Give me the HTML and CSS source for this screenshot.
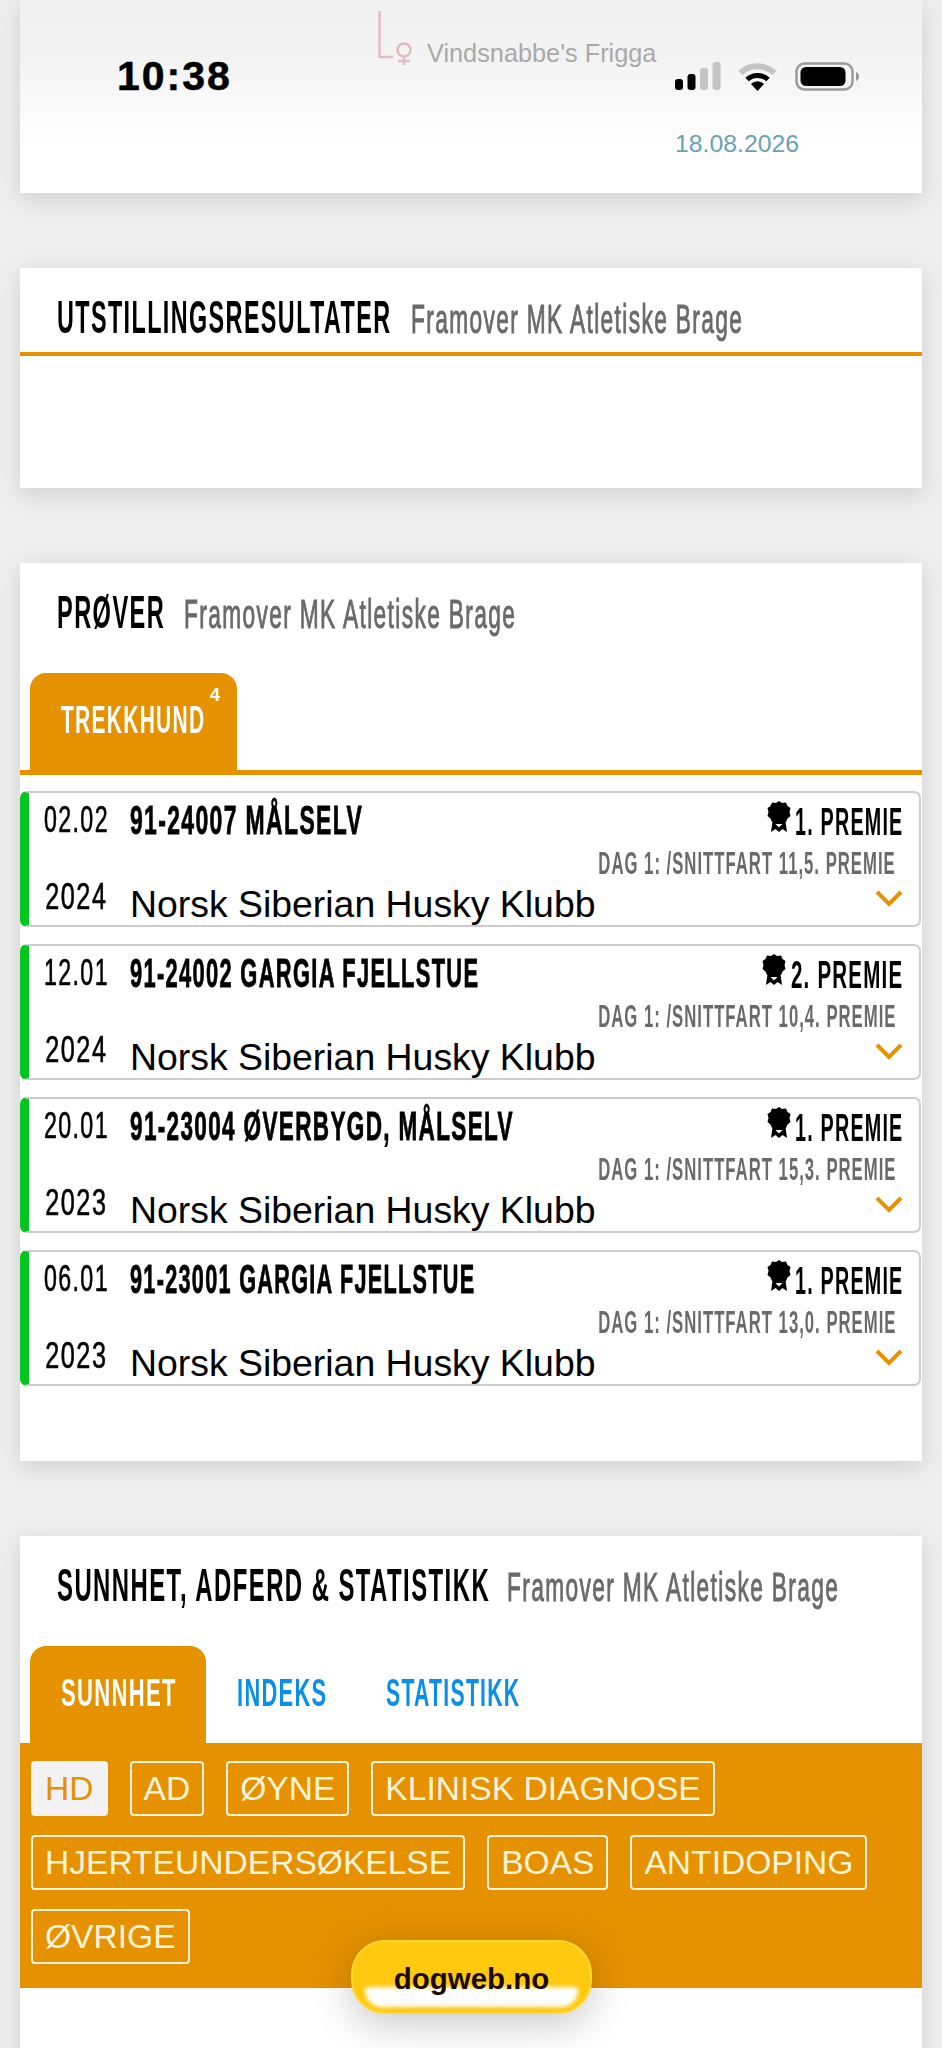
FILE: index.html
```html
<!DOCTYPE html>
<html lang="no">
<head>
    <meta charset="UTF-8">
    <meta name="viewport" content="width=device-width, initial-scale=1.0">
    <title>dogweb.no</title>
    <link rel="stylesheet" href="styles.css">
</head>
<body>
    <!-- status bar lies over the top card -->
    <div class="statusbar">
        <span class="clock">10:38</span>
        <div class="status-icons">
            <svg class="ico-signal" width="46" height="29" viewBox="0 0 46 29">
                <rect x="0" y="17" width="8" height="11" rx="3" fill="#000"/>
                <rect x="12.5" y="12" width="8" height="16" rx="3" fill="#000"/>
                <rect x="25" y="6" width="8" height="22" rx="3" fill="#c4c4c4"/>
                <rect x="37.5" y="0" width="8" height="28" rx="3" fill="#c4c4c4"/>
            </svg>
            <svg class="ico-wifi" width="39" height="29" viewBox="0 0 39 29">
                <path d="M2.5 11 A25 25 0 0 1 36.5 11" fill="none" stroke="#c4c4c4" stroke-width="6"/>
                <path d="M9 17.5 A15.5 15.5 0 0 1 30 17.5" fill="none" stroke="#000" stroke-width="5"/>
                <path d="M13 22 A9 9 0 0 1 26 22 L19.5 29 Z" fill="#000"/>
            </svg>
            <svg class="ico-battery" width="65" height="29" viewBox="0 0 65 29">
                <rect x="1.5" y="1.5" width="56" height="26" rx="8" fill="none" stroke="#9a9a9a" stroke-width="2.5"/>
                <rect x="5.5" y="5" width="45" height="19" rx="5.5" fill="#000"/>
                <path d="M61 10 C65 11 65 18 61 19 Z" fill="#9a9a9a"/>
            </svg>
        </div>
    </div>

    <section class="card card-top">
        <div class="dog-name">
            <svg class="dog-logo" width="38" height="56" viewBox="0 0 38 56">
                <path d="M1.5 0 V46 H15" fill="none" stroke="#e3bcc3" stroke-width="2.5"/>
                <circle cx="26" cy="39" r="6.5" fill="none" stroke="#e3bcc3" stroke-width="2.5"/>
                <path d="M26 45 V54 M20 50 H32" fill="none" stroke="#e3bcc3" stroke-width="2.5"/>
            </svg>
            <span>Vindsnabbe's Frigga</span>
        </div>
        <div class="print-date">18.08.2026</div>
    </section>

    <section class="card card-show">
        <div class="card-head with-line">
            <h2 class="head-title w-show"><span class="sq">UTSTILLINGSRESULTATER</span></h2>
            <div class="head-sub"><span class="sq">Framover MK Atletiske Brage</span></div>
        </div>
    </section>

    <section class="card card-trials">
        <div class="card-head">
            <h2 class="head-title w-trials"><span class="sq">PRØVER</span></h2>
            <div class="head-sub"><span class="sq">Framover MK Atletiske Brage</span></div>
        </div>
        <div class="tabs tabs-line">
            <a class="tab active tab-sled"><span class="sq">TREKKHUND</span><sup class="tab-count">4</sup></a>
        </div>
        <div class="trial">
            <div class="trial-date"><span class="sq-c">02.02</span><span class="sq-c">2024</span></div>
            <div class="trial-main">
                <div class="trial-title t-malselv"><span class="sq">91-24007 MÅLSELV</span></div>
                <div class="trial-club">Norsk Siberian Husky Klubb</div>
            </div>
            <div class="trial-result">
                <div class="prize"><svg class="rosette" width="24" height="32" viewBox="0 0 24 32"><use href="#rosette"/></svg><span class="sq-r">1. PREMIE</span></div>
                <div class="prize-sub"><span class="sq-r">DAG 1: /SNITTFART 11,5. PREMIE</span></div>
                <svg class="chevron" width="28" height="17" viewBox="0 0 28 17"><path d="M2 2 L14 14 L26 2" fill="none" stroke="#e59100" stroke-width="4"/></svg>
            </div>
        </div>
        <div class="trial">
            <div class="trial-date"><span class="sq-c">12.01</span><span class="sq-c">2024</span></div>
            <div class="trial-main">
                <div class="trial-title t-gargia"><span class="sq">91-24002 GARGIA FJELLSTUE</span></div>
                <div class="trial-club">Norsk Siberian Husky Klubb</div>
            </div>
            <div class="trial-result">
                <div class="prize prize-second"><svg class="rosette" width="24" height="32" viewBox="0 0 24 32"><use href="#rosette"/></svg><span class="sq-r">2. PREMIE</span></div>
                <div class="prize-sub"><span class="sq-r">DAG 1: /SNITTFART 10,4. PREMIE</span></div>
                <svg class="chevron" width="28" height="17" viewBox="0 0 28 17"><path d="M2 2 L14 14 L26 2" fill="none" stroke="#e59100" stroke-width="4"/></svg>
            </div>
        </div>
        <div class="trial">
            <div class="trial-date"><span class="sq-c">20.01</span><span class="sq-c">2023</span></div>
            <div class="trial-main">
                <div class="trial-title t-overbygd"><span class="sq">91-23004 ØVERBYGD, MÅLSELV</span></div>
                <div class="trial-club">Norsk Siberian Husky Klubb</div>
            </div>
            <div class="trial-result">
                <div class="prize"><svg class="rosette" width="24" height="32" viewBox="0 0 24 32"><use href="#rosette"/></svg><span class="sq-r">1. PREMIE</span></div>
                <div class="prize-sub"><span class="sq-r">DAG 1: /SNITTFART 15,3. PREMIE</span></div>
                <svg class="chevron" width="28" height="17" viewBox="0 0 28 17"><path d="M2 2 L14 14 L26 2" fill="none" stroke="#e59100" stroke-width="4"/></svg>
            </div>
        </div>
        <div class="trial">
            <div class="trial-date"><span class="sq-c">06.01</span><span class="sq-c">2023</span></div>
            <div class="trial-main">
                <div class="trial-title t-gargia2"><span class="sq">91-23001 GARGIA FJELLSTUE</span></div>
                <div class="trial-club">Norsk Siberian Husky Klubb</div>
            </div>
            <div class="trial-result">
                <div class="prize"><svg class="rosette" width="24" height="32" viewBox="0 0 24 32"><use href="#rosette"/></svg><span class="sq-r">1. PREMIE</span></div>
                <div class="prize-sub"><span class="sq-r">DAG 1: /SNITTFART 13,0. PREMIE</span></div>
                <svg class="chevron" width="28" height="17" viewBox="0 0 28 17"><path d="M2 2 L14 14 L26 2" fill="none" stroke="#e59100" stroke-width="4"/></svg>
            </div>
        </div>
    </section>

    <section class="card card-health">
        <div class="card-head">
            <h2 class="head-title w-health"><span class="sq">SUNNHET, ADFERD &amp; STATISTIKK</span></h2>
            <div class="head-sub"><span class="sq">Framover MK Atletiske Brage</span></div>
        </div>
        <div class="tabs">
            <a class="tab active tab-health"><span class="sq">SUNNHET</span></a>
            <a class="tab tab-index"><span class="sq">INDEKS</span></a>
            <a class="tab tab-stats"><span class="sq">STATISTIKK</span></a>
        </div>
        <div class="chips">
            <a class="chip selected">HD</a>
            <a class="chip">AD</a>
            <a class="chip">ØYNE</a>
            <a class="chip">KLINISK DIAGNOSE</a>
            <a class="chip">HJERTEUNDERSØKELSE</a>
            <a class="chip">BOAS</a>
            <a class="chip">ANTIDOPING</a>
            <a class="chip">ØVRIGE</a>
        </div>
    </section>

    <div class="site-pill"><span>dogweb.no</span></div>

    <svg class="defs" width="0" height="0">
        <symbol id="rosette" viewBox="0 0 24 32">
            <path d="M6 17 L4 31 L8.5 28 L12 31 L15.5 28 L20 31 L18 17 Z" fill="#000"/>
            <path d="M8.5 23 H15.5 L12 26.5 Z" fill="#fff"/>
            <path d="M12 0 L15 2 L19 1.5 L20.5 5 L23.5 7 L22.5 11 L23.5 15 L20.5 17.5 L19 21 L15 20.5 L12 22.5 L9 20.5 L5 21 L3.5 17.5 L0.5 15 L1.5 11 L0.5 7 L3.5 5 L5 1.5 L9 2 Z" fill="#000"/>
        </symbol>
    </svg>
</body>
</html>
```

FILE: styles.css
```css
:root {
    --orange: #e59100;
    --blue: #0a8fe8;
    --grey: #6a6a6a;
}
html {
    overflow: hidden;
    height: 2048px;
}
body {
    font-family: "Liberation Sans", Arial, sans-serif;
    background: #eeeeee;
    color: #000;
    margin: 0;
    padding: 0 20px;
    height: 2048px;
    overflow: hidden;
    position: relative;
}

/* squeezed text, the original uses a condensed webfont */
.sq, .sq-c, .sq-r {
    display: inline-block;
    white-space: nowrap;
    font-weight: bold;
    letter-spacing: 0.06em;
    transform: scaleX(var(--sx, 0.6));
}
.sq { transform-origin: 0 50%; }
.sq-c { transform-origin: 50% 50%; }
.sq-r { transform-origin: 100% 50%; }

.card {
    background: #fff;
    box-shadow: 0 6px 22px rgba(0, 0, 0, 0.13);
    margin-bottom: 75px;
}

/* status bar */
.statusbar {
    position: absolute;
    left: 117px;
    top: 53px;
    width: 743px;
    display: flex;
    justify-content: space-between;
    align-items: center;
    z-index: 2;
}
.clock {
    font-size: 41px;
    font-weight: bold;
    letter-spacing: 2px;
    line-height: 46px;
    -webkit-text-stroke: 0.5px #000;
}
.status-icons {
    display: flex;
    gap: 18px;
    align-items: center;
}
.ico-signal { margin-right: -1px; }

/* top card */
.card-top {
    height: 193px;
    background: linear-gradient(#f0f0f0 0, #f3f3f3 30%, #fff 75%);
    display: flex;
    flex-direction: column;
    box-sizing: border-box;
    padding-top: 11px;
}
.dog-name {
    display: flex;
    align-items: flex-end;
    margin-left: 358px;
    gap: 11px;
    color: #a9a9a9;
    font-size: 25.3px;
    height: 56px;
}
.dog-name span {
    line-height: 28px;
}
.print-date {
    margin: 63px 0 0 655px;
    font-size: 24.8px;
    color: #6a9fb8;
    line-height: 28px;
}

/* card headings */
.card-head {
    display: flex;
    align-items: baseline;
    padding: 24px 0 0 37px;
    height: 60px;
}
.head-title {
    margin: 0;
    font-size: 46px;
    line-height: 50px;
    white-space: nowrap;
}
.head-sub {
    font-size: 40px;
    line-height: 50px;
    color: var(--grey);
    width: 340px;
    white-space: nowrap;
    --sx: 0.568;
}
.head-sub .sq {
    width: 400px;
    font-weight: normal;
    -webkit-text-stroke: 1px var(--grey);
}
.with-line { border-bottom: 4px solid var(--orange); }
.w-show { width: 354px; --sx: 0.508; }
.w-trials { width: 127px; --sx: 0.513; }
.w-health { width: 450px; --sx: 0.52; }

.card-show { height: 220px; }
.card-trials { height: 898px; }
.card-health { height: 600px; }

/* tabs */
.tabs {
    display: flex;
    padding: 26px 0 0 10px;
    height: 97px;
}
.tabs-line {
    border-bottom: 5px solid var(--orange);
    margin-bottom: 16px;
}
.tab {
    display: block;
    font-size: 38px;
    line-height: 44px;
    padding-top: 25px;
    box-sizing: border-box;
    color: var(--blue);
    position: relative;
}
.tab.active {
    background: var(--orange);
    color: #fff;
    border-radius: 16px 16px 0 0;
}
.tab .sq { margin-left: 31px; }
.tab-sled { width: 207px; --sx: 0.553; }
.tab-health { width: 176px; --sx: 0.58; }
.tab-index { width: 149px; --sx: 0.575; }
.tab-stats { width: 180px; --sx: 0.558; }
.tab-count {
    position: absolute;
    top: 12px;
    left: 180px;
    font-size: 18px;
    line-height: 20px;
    font-weight: bold;
}

/* trial rows */
.trial {
    display: flex;
    height: 136px;
    box-sizing: border-box;
    border: 2px solid #ccc;
    border-left: 9px solid #00c61e;
    border-radius: 7px;
    margin-bottom: 17px;
    margin-right: 1px;
}
.trial-date {
    width: 95px;
    margin-right: 6px;
    flex-shrink: 0;
    display: flex;
    flex-direction: column;
    align-items: center;
    font-size: 36px;
    line-height: 40px;
    gap: 37px;
    padding-top: 7px;
    --sx: 0.645;
}
.trial-date .sq-c { font-weight: normal; -webkit-text-stroke: 0.6px #000; }
.trial-date .sq-c:last-child { --sx: 0.7; }
.trial-main {
    flex: 1;
    min-width: 0;
}
.trial-title {
    font-size: 40px;
    line-height: 44px;
    padding-top: 5px;
}
.trial-title .sq { -webkit-text-stroke: 0.8px #000; }
.t-malselv { --sx: 0.573; }
.t-gargia { --sx: 0.547; }
.t-overbygd { --sx: 0.563; }
.t-gargia2 { --sx: 0.541; }
.trial-club {
    font-size: 37.4px;
    line-height: 42px;
    margin-top: 41px;
    white-space: nowrap;
}
.trial-result {
    width: 340px;
    flex-shrink: 0;
    display: flex;
    flex-direction: column;
    align-items: flex-end;
    padding-right: 16px;
    box-sizing: border-box;
}
.prize {
    display: flex;
    align-items: center;
    font-size: 38px;
    line-height: 44px;
    padding-top: 7px;
    position: relative;
    --sx: 0.52;
}
.prize-second { --sx: 0.54; }
.rosette {
    position: absolute;
    right: 112px;
    top: 8px;
}
.prize-second .rosette { right: 117px; }
.prize-sub {
    font-size: 32px;
    line-height: 36px;
    color: var(--grey);
    margin-right: 7px;
    margin-top: 1px;
    --sx: 0.522;
}
.chevron {
    margin-top: 9px;
    flex-shrink: 0;
}

/* chips */
.chips {
    background: var(--orange);
    display: flex;
    flex-wrap: wrap;
    gap: 19px 22px;
    padding: 18px 11px 25px;
    align-content: flex-start;
    height: 245px;
    box-sizing: border-box;
}
.chip {
    display: block;
    font-size: 33.6px;
    line-height: 51px;
    padding: 0 12px;
    border: 2px solid #fff3d9;
    border-radius: 4px;
    color: #fff3d9;
}
.chip.selected {
    background: #f2f2f2;
    color: var(--orange);
    border-color: #f2f2f2;
}

/* floating pill */
.site-pill {
    position: absolute;
    left: 351px;
    top: 1940px;
    width: 241px;
    height: 74px;
    box-sizing: border-box;
    border: 2px solid #ffd92e;
    border-radius: 34px;
    background: #ffc90f;
    text-align: center;
    font-size: 29.5px;
    font-weight: bold;
    line-height: 74px;
    color: #1a0a00;
    box-shadow: 0 10px 40px rgba(0, 0, 0, 0.22);
    overflow: hidden;
}
.site-pill span {
    position: relative;
    z-index: 1;
}
.site-pill::after {
    content: "";
    position: absolute;
    left: 12px;
    right: 12px;
    bottom: 5px;
    height: 20px;
    background: #fff;
    border-radius: 4px 4px 20px 20px;
    filter: blur(2px);
}
.defs { position: absolute; }
```
